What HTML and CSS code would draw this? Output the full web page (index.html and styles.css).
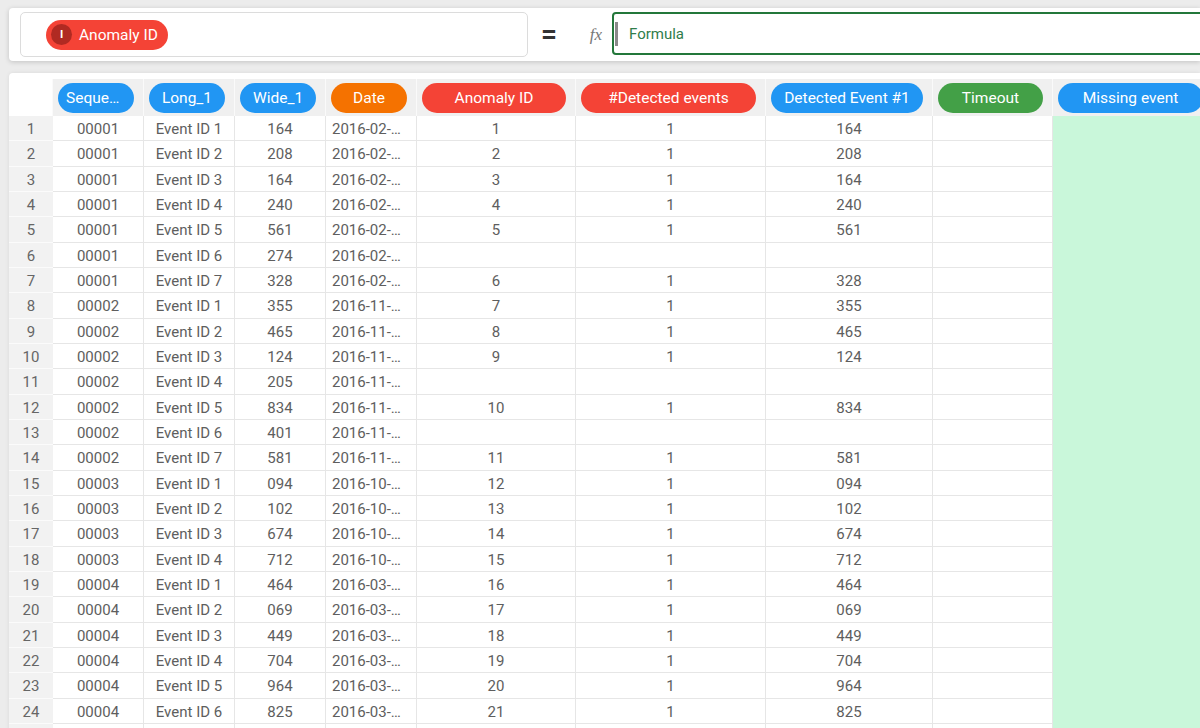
FILE: index.html
```html
<!DOCTYPE html>
<html lang="en">
<head>
    <meta charset="UTF-8">
    <meta name="viewport" content="width=device-width, initial-scale=1.0">
    <title>Anomaly detection - Sheet</title>
    <link rel="stylesheet" href="styles.css">
</head>
<body>
    <div class="toolbar">
        <div class="field-box">
            <span class="chip chip-red field-chip"><span class="chip-icon">I</span>Anomaly ID</span>
        </div>
        <span class="equals">=</span>
        <span class="fx">fx</span>
        <div class="formula-box">
            <span class="caret"></span>
            <span class="formula-text">Formula</span>
        </div>
    </div>

    <div class="sheet">
        <div class="row head">
            <div class="hcell corner"></div>
            <div class="hcell"><span class="chip chip-blue">Sequence</span></div>
            <div class="hcell"><span class="chip chip-blue">Long_1</span></div>
            <div class="hcell"><span class="chip chip-blue">Wide_1</span></div>
            <div class="hcell"><span class="chip chip-orange">Date</span></div>
            <div class="hcell"><span class="chip chip-red">Anomaly ID</span></div>
            <div class="hcell"><span class="chip chip-red">#Detected events</span></div>
            <div class="hcell"><span class="chip chip-blue">Detected Event #1</span></div>
            <div class="hcell"><span class="chip chip-green">Timeout</span></div>
            <div class="hcell"><span class="chip chip-blue">Missing event</span></div>
        </div>

        <div class="row"><div class="num">1</div><div class="cell">00001</div><div class="cell">Event ID 1</div><div class="cell">164</div><div class="cell date">2016-02-…</div><div class="cell">1</div><div class="cell">1</div><div class="cell">164</div><div class="cell"></div><div class="cell new"></div></div>
        <div class="row"><div class="num">2</div><div class="cell">00001</div><div class="cell">Event ID 2</div><div class="cell">208</div><div class="cell date">2016-02-…</div><div class="cell">2</div><div class="cell">1</div><div class="cell">208</div><div class="cell"></div><div class="cell new"></div></div>
        <div class="row"><div class="num">3</div><div class="cell">00001</div><div class="cell">Event ID 3</div><div class="cell">164</div><div class="cell date">2016-02-…</div><div class="cell">3</div><div class="cell">1</div><div class="cell">164</div><div class="cell"></div><div class="cell new"></div></div>
        <div class="row"><div class="num">4</div><div class="cell">00001</div><div class="cell">Event ID 4</div><div class="cell">240</div><div class="cell date">2016-02-…</div><div class="cell">4</div><div class="cell">1</div><div class="cell">240</div><div class="cell"></div><div class="cell new"></div></div>
        <div class="row"><div class="num">5</div><div class="cell">00001</div><div class="cell">Event ID 5</div><div class="cell">561</div><div class="cell date">2016-02-…</div><div class="cell">5</div><div class="cell">1</div><div class="cell">561</div><div class="cell"></div><div class="cell new"></div></div>
        <div class="row"><div class="num">6</div><div class="cell">00001</div><div class="cell">Event ID 6</div><div class="cell">274</div><div class="cell date">2016-02-…</div><div class="cell"></div><div class="cell"></div><div class="cell"></div><div class="cell"></div><div class="cell new"></div></div>
        <div class="row"><div class="num">7</div><div class="cell">00001</div><div class="cell">Event ID 7</div><div class="cell">328</div><div class="cell date">2016-02-…</div><div class="cell">6</div><div class="cell">1</div><div class="cell">328</div><div class="cell"></div><div class="cell new"></div></div>
        <div class="row"><div class="num">8</div><div class="cell">00002</div><div class="cell">Event ID 1</div><div class="cell">355</div><div class="cell date">2016-11-…</div><div class="cell">7</div><div class="cell">1</div><div class="cell">355</div><div class="cell"></div><div class="cell new"></div></div>
        <div class="row"><div class="num">9</div><div class="cell">00002</div><div class="cell">Event ID 2</div><div class="cell">465</div><div class="cell date">2016-11-…</div><div class="cell">8</div><div class="cell">1</div><div class="cell">465</div><div class="cell"></div><div class="cell new"></div></div>
        <div class="row"><div class="num">10</div><div class="cell">00002</div><div class="cell">Event ID 3</div><div class="cell">124</div><div class="cell date">2016-11-…</div><div class="cell">9</div><div class="cell">1</div><div class="cell">124</div><div class="cell"></div><div class="cell new"></div></div>
        <div class="row"><div class="num">11</div><div class="cell">00002</div><div class="cell">Event ID 4</div><div class="cell">205</div><div class="cell date">2016-11-…</div><div class="cell"></div><div class="cell"></div><div class="cell"></div><div class="cell"></div><div class="cell new"></div></div>
        <div class="row"><div class="num">12</div><div class="cell">00002</div><div class="cell">Event ID 5</div><div class="cell">834</div><div class="cell date">2016-11-…</div><div class="cell">10</div><div class="cell">1</div><div class="cell">834</div><div class="cell"></div><div class="cell new"></div></div>
        <div class="row"><div class="num">13</div><div class="cell">00002</div><div class="cell">Event ID 6</div><div class="cell">401</div><div class="cell date">2016-11-…</div><div class="cell"></div><div class="cell"></div><div class="cell"></div><div class="cell"></div><div class="cell new"></div></div>
        <div class="row"><div class="num">14</div><div class="cell">00002</div><div class="cell">Event ID 7</div><div class="cell">581</div><div class="cell date">2016-11-…</div><div class="cell">11</div><div class="cell">1</div><div class="cell">581</div><div class="cell"></div><div class="cell new"></div></div>
        <div class="row"><div class="num">15</div><div class="cell">00003</div><div class="cell">Event ID 1</div><div class="cell">094</div><div class="cell date">2016-10-…</div><div class="cell">12</div><div class="cell">1</div><div class="cell">094</div><div class="cell"></div><div class="cell new"></div></div>
        <div class="row"><div class="num">16</div><div class="cell">00003</div><div class="cell">Event ID 2</div><div class="cell">102</div><div class="cell date">2016-10-…</div><div class="cell">13</div><div class="cell">1</div><div class="cell">102</div><div class="cell"></div><div class="cell new"></div></div>
        <div class="row"><div class="num">17</div><div class="cell">00003</div><div class="cell">Event ID 3</div><div class="cell">674</div><div class="cell date">2016-10-…</div><div class="cell">14</div><div class="cell">1</div><div class="cell">674</div><div class="cell"></div><div class="cell new"></div></div>
        <div class="row"><div class="num">18</div><div class="cell">00003</div><div class="cell">Event ID 4</div><div class="cell">712</div><div class="cell date">2016-10-…</div><div class="cell">15</div><div class="cell">1</div><div class="cell">712</div><div class="cell"></div><div class="cell new"></div></div>
        <div class="row"><div class="num">19</div><div class="cell">00004</div><div class="cell">Event ID 1</div><div class="cell">464</div><div class="cell date">2016-03-…</div><div class="cell">16</div><div class="cell">1</div><div class="cell">464</div><div class="cell"></div><div class="cell new"></div></div>
        <div class="row"><div class="num">20</div><div class="cell">00004</div><div class="cell">Event ID 2</div><div class="cell">069</div><div class="cell date">2016-03-…</div><div class="cell">17</div><div class="cell">1</div><div class="cell">069</div><div class="cell"></div><div class="cell new"></div></div>
        <div class="row"><div class="num">21</div><div class="cell">00004</div><div class="cell">Event ID 3</div><div class="cell">449</div><div class="cell date">2016-03-…</div><div class="cell">18</div><div class="cell">1</div><div class="cell">449</div><div class="cell"></div><div class="cell new"></div></div>
        <div class="row"><div class="num">22</div><div class="cell">00004</div><div class="cell">Event ID 4</div><div class="cell">704</div><div class="cell date">2016-03-…</div><div class="cell">19</div><div class="cell">1</div><div class="cell">704</div><div class="cell"></div><div class="cell new"></div></div>
        <div class="row"><div class="num">23</div><div class="cell">00004</div><div class="cell">Event ID 5</div><div class="cell">964</div><div class="cell date">2016-03-…</div><div class="cell">20</div><div class="cell">1</div><div class="cell">964</div><div class="cell"></div><div class="cell new"></div></div>
        <div class="row"><div class="num">24</div><div class="cell">00004</div><div class="cell">Event ID 6</div><div class="cell">825</div><div class="cell date">2016-03-…</div><div class="cell">21</div><div class="cell">1</div><div class="cell">825</div><div class="cell"></div><div class="cell new"></div></div>
        <div class="row"><div class="num"></div><div class="cell"></div><div class="cell"></div><div class="cell"></div><div class="cell"></div><div class="cell"></div><div class="cell"></div><div class="cell"></div><div class="cell"></div><div class="cell new"></div></div>
    </div>
</body>
</html>
```

FILE: styles.css
```css
body {
    margin: 0;
    height: 728px;
    overflow: hidden;
    background-color: #ececec;
    font-family: Roboto, "Liberation Sans", sans-serif;
}

/* formula toolbar */
.toolbar {
    display: flex;
    align-items: flex-start;
    height: 53px;
    margin: 8px 0 0 9px;
    padding: 4px 0 0 11px;
    box-sizing: border-box;
    background-color: white;
    border-radius: 4px 0 0 4px;
    box-shadow: 0 1px 5px rgba(0,0,0,0.18);
}
.field-box {
    display: flex;
    align-items: center;
    width: 508px;
    height: 45px;
    box-sizing: border-box;
    padding-left: 25px;
    border: 1px solid #dcdcdc;
    border-radius: 5px;
}
.equals {
    width: 42px;
    text-align: center;
    font-size: 28px;
    font-weight: bold;
    line-height: 44px;
    color: #333;
}
.fx {
    width: 32px;
    margin-left: 10px;
    text-align: center;
    font-family: "Liberation Serif", serif;
    font-style: italic;
    font-size: 17px;
    line-height: 45px;
    color: #777;
}
.formula-box {
    flex: 1;
    display: flex;
    align-items: center;
    height: 43px;
    margin-right: -10px;
    box-sizing: border-box;
    border: 2px solid #23773a;
    border-radius: 4px;
}
.caret {
    width: 3px;
    height: 24px;
    margin-left: 1px;
    background-color: #8a8a8a;
}
.formula-text {
    margin-left: 11px;
    font-size: 15px;
    color: #2f7d4b;
}

/* chips */
.chip {
    display: block;
    height: 30px;
    line-height: 30px;
    border-radius: 15px;
    color: white;
    font-size: 15.5px;
    font-weight: 400;
    text-align: center;
    white-space: nowrap;
    overflow: hidden;
    text-overflow: ellipsis;
    padding: 0 8px;
}
.chip-blue { background-color: #2196f3; }
.chip-orange { background-color: #f57200; }
.chip-red { background-color: #f44336; }
.chip-green { background-color: #43a047; }

.field-chip {
    display: flex;
    align-items: center;
    padding: 0 10px 0 5px;
}
.chip-icon {
    width: 21px;
    height: 21px;
    margin-right: 7px;
    border-radius: 50%;
    background-color: #b02a22;
    font-size: 11px;
    font-weight: bold;
    line-height: 21px;
    text-align: center;
}

/* sheet */
.sheet {
    margin: 12px 0 0 9px;
    padding-top: 6px;
    background-color: white;
    border-radius: 4px 0 0 0;
    box-shadow: 0 0 4px rgba(0,0,0,0.08);
    color: #5e5e5e;
    font-size: 15px;
}
.row {
    display: grid;
    grid-template-columns: 44px 91px 91px 91px 91px 159px 190px 167px 120px 160px;
}
.hcell {
    height: 37px;
    box-sizing: border-box;
    padding: 4px 9px 0 5px;
    background-color: #f0f0f0;
    border-right: 1px solid #fafafa;
}
.hcell.corner {
    background-color: white;
}
.num, .cell {
    height: 25.33px;
    box-sizing: border-box;
    line-height: 26px;
    text-align: center;
    white-space: nowrap;
    overflow: hidden;
}
.num {
    background-color: #f2f2f2;
    border-bottom: 1px solid #fbfbfb;
    color: #666;
}
.cell {
    border-right: 1px solid #e6e6e6;
    border-bottom: 1px solid #e6e6e6;
}
.cell.date {
    text-align: left;
    padding-left: 6px;
}
.cell.new {
    background-color: #c9f7da;
    border-color: #c9f7da;
}
```
